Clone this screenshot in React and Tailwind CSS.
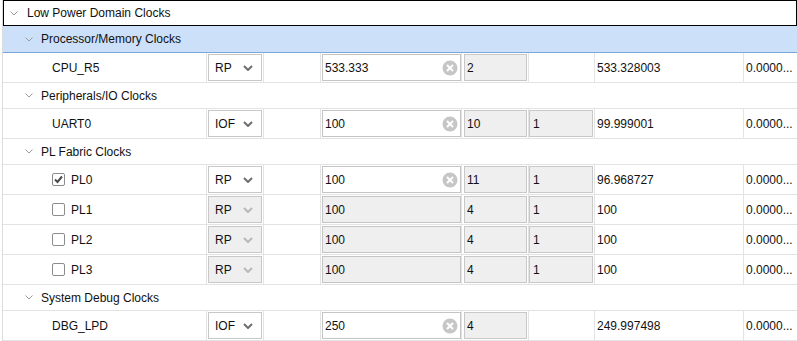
import React from "react";

const TreeChevron = () => (
  <svg width="8" height="5" viewBox="0 0 8 5" className="shrink-0">
    <path d="M0.5 0.5 L4 4 L7.5 0.5" fill="none" stroke="#9a9a9a" strokeWidth="1" />
  </svg>
);

const DropChevron = ({ disabled }) => (
  <svg width="10" height="6" viewBox="0 0 10 6" className="shrink-0">
    <path d="M1 1 L5 5 L9 1" fill="none" stroke={disabled ? "#b8b8b8" : "#6e6e6e"} strokeWidth="2" />
  </svg>
);

const ClearIcon = () => (
  <svg width="16" height="16" viewBox="0 0 16 16" className="shrink-0">
    <circle cx="8" cy="8" r="7.5" fill="#c6c6c6" />
    <path d="M5 5 L11 11 M11 5 L5 11" stroke="#ffffff" strokeWidth="2" />
  </svg>
);

const Checkbox = ({ checked }) => (
  <div className="w-[13px] h-[13px] rounded-[2px] border border-[#8c8c8c] bg-white flex items-center justify-center shrink-0">
    {checked && (
      <svg width="11" height="11" viewBox="0 0 11 11">
        <path d="M2 5.5 L4.5 8 L9 2.5" fill="none" stroke="#4a4a4a" strokeWidth="2" />
      </svg>
    )}
  </div>
);

const rows = [
  { type: "root", label: "Low Power Domain Clocks" },
  { type: "group", label: "Processor/Memory Clocks", selected: true },
  { type: "item", name: "CPU_R5", src: "RP", freq: "533.333", d0: "2", d1: null, actual: "533.328003" },
  { type: "group", label: "Peripherals/IO Clocks" },
  { type: "item", name: "UART0", src: "IOF", freq: "100", d0: "10", d1: "1", actual: "99.999001" },
  { type: "group", label: "PL Fabric Clocks" },
  { type: "item", name: "PL0", check: true, checked: true, src: "RP", freq: "100", d0: "11", d1: "1", actual: "96.968727" },
  { type: "item", name: "PL1", check: true, disabled: true, src: "RP", freq: "100", d0: "4", d1: "1", actual: "100" },
  { type: "item", name: "PL2", check: true, disabled: true, src: "RP", freq: "100", d0: "4", d1: "1", actual: "100" },
  { type: "item", name: "PL3", check: true, disabled: true, src: "RP", freq: "100", d0: "4", d1: "1", actual: "100" },
  { type: "group", label: "System Debug Clocks" },
  { type: "item", name: "DBG_LPD", src: "IOF", freq: "250", d0: "4", d1: null, actual: "249.997498" },
];

const Item = ({ r }) => (
  <div className="flex h-[30px] border-b border-[#e3e3e3]">
    <div className="w-[204px] shrink-0 border-r border-[#e3e3e3] flex items-center pl-[49px] gap-[6px]">
      {r.check && <Checkbox checked={r.checked} />}
      <span>{r.name}</span>
    </div>
    <div className="w-[57px] shrink-0 border-r border-[#e3e3e3] flex items-center pl-px">
      <div
        className={`w-[54px] h-[27px] border border-[#c8c8c8] flex items-center justify-between pl-[6px] pr-[8px] ${
          r.disabled ? "bg-[#efefef]" : "bg-white"
        }`}
      >
        <span>{r.src}</span>
        <DropChevron disabled={r.disabled} />
      </div>
    </div>
    <div className="w-[57px] shrink-0 border-r border-[#e3e3e3]" />
    <div className="w-[141px] shrink-0 border-r border-[#e3e3e3] flex items-center pl-px">
      <div
        className={`w-[139px] h-[27px] border border-[#c4c4c4] flex items-center justify-between pl-[2px] pr-[2px] ${
          r.disabled ? "bg-[#efefef]" : "bg-white"
        }`}
      >
        <span>{r.freq}</span>
        {!r.disabled && <ClearIcon />}
      </div>
    </div>
    <div className="w-[67px] shrink-0 border-r border-[#e3e3e3] flex items-center pl-[2px]">
      <div className="w-[63px] h-[27px] border border-[#c8c8c8] bg-[#efefef] flex items-center pl-[2px]">
        <span>{r.d0}</span>
      </div>
    </div>
    <div className="w-[66px] shrink-0 border-r border-[#e3e3e3] flex items-center">
      {r.d1 && (
        <div className="w-[64px] h-[27px] border border-[#c8c8c8] bg-[#efefef] flex items-center pl-[3px]">
          <span>{r.d1}</span>
        </div>
      )}
    </div>
    <div className="w-[149px] shrink-0 border-r border-[#e3e3e3] flex items-center pl-[2px]">
      <span>{r.actual}</span>
    </div>
    <div className="flex-1 flex items-center pl-[2px] whitespace-nowrap overflow-hidden">
      <span>0.0000...</span>
    </div>
  </div>
);

export default function App() {
  return (
    <div className="w-[797px] h-[341px] overflow-hidden bg-white font-['Liberation_Sans',Arial,sans-serif] text-[12px] text-[#111111] leading-none">
      <div className="ml-[2px] border-l border-[#dcdcdc] h-full flex flex-col">
        {rows.map((r, i) => {
          if (r.type === "root")
            return (
              <div key={i} className="h-[26px] shrink-0 border border-black flex items-center pl-[6px] gap-[9px]">
                <TreeChevron />
                <span>{r.label}</span>
              </div>
            );
          if (r.type === "group")
            return (
              <div
                key={i}
                className={`shrink-0 flex items-center pl-[22px] gap-[8px] ${
                  r.selected
                    ? "h-[27px] bg-[#cde0f9] border-b border-[#7ba6dc]"
                    : "h-[26px] border-b border-[#e3e3e3]"
                }`}
              >
                <TreeChevron />
                <span>{r.label}</span>
              </div>
            );
          return <Item key={i} r={r} />;
        })}
      </div>
    </div>
  );
}
